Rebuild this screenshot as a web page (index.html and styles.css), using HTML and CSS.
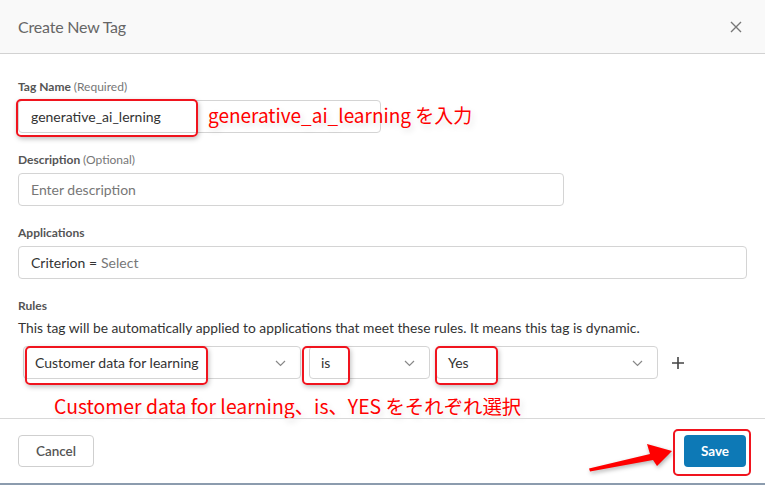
FILE: index.html
```html
<!DOCTYPE html>
<html lang="en">
<head>
<meta charset="UTF-8">
<meta name="viewport" content="width=device-width, initial-scale=1.0">
<title>Create New Tag</title>
<link rel="stylesheet" href="styles.css">
</head>
<body>

<div class="modal">
    <div class="modal-head">
        <h1>Create New Tag</h1>
        <svg class="close" width="12" height="12" viewBox="0 0 12 12"><path d="M1 1L11 11M11 1L1 11" stroke="#777" stroke-width="1.4"/></svg>
    </div>

    <div class="modal-body">
        <div class="field">
            <label>Tag Name <span class="hint">(Required)</span></label>
            <div class="input-wrap">
                <div class="input tag-input">generative_ai_lerning</div>
                <div class="mark mark-name"></div>
                <span class="note note-name">generative_ai_learning を入力</span>
            </div>
        </div>

        <div class="field">
            <label>Description <span class="hint">(Optional)</span></label>
            <div class="input desc-input placeholder">Enter description</div>
        </div>

        <div class="field">
            <label>Applications</label>
            <div class="input"><span class="dark">Criterion =</span> <span class="placeholder">Select</span></div>
        </div>

        <div class="field">
            <label>Rules</label>
            <p class="rules-text">This tag will be automatically applied to applications that meet these rules. It means this tag is dynamic.</p>
            <div class="rule-row">
                <div class="select sel-1">Customer data for learning
                    <svg class="chev" width="11" height="7" viewBox="0 0 11 7"><path d="M1 1L5.5 5.5L10 1" fill="none" stroke="#888" stroke-width="1.2"/></svg>
                    <div class="mark mark-1"></div>
                </div>
                <div class="select sel-2">is
                    <svg class="chev" width="11" height="7" viewBox="0 0 11 7"><path d="M1 1L5.5 5.5L10 1" fill="none" stroke="#888" stroke-width="1.2"/></svg>
                    <div class="mark mark-2"></div>
                </div>
                <div class="select sel-3">Yes
                    <svg class="chev" width="11" height="7" viewBox="0 0 11 7"><path d="M1 1L5.5 5.5L10 1" fill="none" stroke="#888" stroke-width="1.2"/></svg>
                    <div class="mark mark-3"></div>
                </div>
                <svg class="plus" width="14" height="14" viewBox="0 0 14 14"><path d="M7 1V13M1 7H13" stroke="#444" stroke-width="1.6"/></svg>
            </div>
            <div class="note note-rules">Customer data for learning、is、YES をそれぞれ選択</div>
        </div>
    </div>

    <div class="modal-foot">
        <button class="btn btn-cancel" type="button">Cancel</button>
        <div class="save-wrap">
            <svg class="arrow" width="92" height="45" viewBox="0 0 92 45">
                <path d="M5 29.5L66 15L63 5L88 12L73 27L69 21L6 32.5Z" fill="#f00"/>
            </svg>
            <button class="btn btn-save" type="button">Save</button>
            <div class="mark mark-save"></div>
        </div>
    </div>
</div>

</body>
</html>
```

FILE: styles.css
```css
body {
    margin: 0;
    font-family: Lato, "Noto Sans", sans-serif;
    background: #fff;
    width: 765px;
    height: 485px;
    overflow: hidden;
}

.modal {
    height: 485px;
    display: flex;
    flex-direction: column;
    box-sizing: border-box;
    border-bottom: 2px solid #8c9cae;
}

.modal-head {
    height: 53px;
    background-color: #f9f9f9;
    border-bottom: 1px solid #d2d2d2;
    display: flex;
    align-items: center;
    justify-content: space-between;
    padding: 0 23px 0 18px;
    flex-shrink: 0;
}

.modal-head h1 {
    margin: 0;
    font-size: 16px;
    font-weight: 400;
    color: #666;
    letter-spacing: -0.2px;
}

.modal-body {
    padding: 26px 18px 0 18px;
    flex: 1;
    min-height: 0;
}

.field {
    margin-bottom: 20px;
}

.field:last-child {
    margin-bottom: 0;
}

.field label {
    display: block;
    font-size: 12px;
    font-weight: 700;
    color: #555;
    line-height: 14px;
    margin-bottom: 6px;
}

.field label .hint {
    font-weight: 400;
    color: #777;
}

.input {
    box-sizing: border-box;
    height: 33px;
    border: 1px solid #d4d4d4;
    border-radius: 4px;
    padding: 0 12px;
    display: flex;
    align-items: center;
    font-size: 14px;
    color: #333;
    background: #fff;
}

.input .dark {
    margin-right: 4px;
}

.placeholder {
    color: #777;
}

.input-wrap {
    position: relative;
    display: flex;
    align-items: center;
}

.tag-input {
    width: 363px;
}

.desc-input {
    width: 546px;
}

.mark {
    position: absolute;
    border: 2px solid #f0141e;
    border-radius: 5px;
    box-shadow: 1px 2px 5px rgba(0, 0, 0, 0.25);
    box-sizing: border-box;
}

.mark-name {
    left: -2px;
    top: -1px;
    width: 182px;
    height: 38px;
}

.note {
    color: #ff0000;
    font-family: "Noto Sans CJK JP", "Noto Sans", sans-serif;
    font-size: 19px;
    line-height: 24px;
    text-shadow: 0 0 4px #fff, 0 0 6px #fff, 2px 3px 6px rgba(0, 0, 0, 0.15);
    white-space: nowrap;
}

.note-name {
    position: absolute;
    left: 190px;
    top: 3px;
}

.rules-text {
    margin: 7px 0 10px 0;
    font-size: 13.8px;
    color: #333;
    line-height: 16px;
}

.rule-row {
    display: flex;
    align-items: center;
    padding-left: 5px;
}

.select {
    position: relative;
    box-sizing: border-box;
    height: 33px;
    border: 1px solid #d4d4d4;
    border-radius: 4px;
    padding: 0 11px;
    display: flex;
    align-items: center;
    font-size: 14px;
    color: #333;
}

.select .chev {
    position: absolute;
    right: 14px;
    top: 13px;
}

.sel-1 {
    width: 278px;
    margin-right: 8px;
}

.sel-2 {
    width: 121px;
    margin-right: 6px;
}

.sel-3 {
    width: 222px;
}

.mark-1 {
    left: 1px;
    top: -1px;
    width: 183px;
    height: 39px;
}

.mark-2 {
    left: -8px;
    top: -1px;
    width: 48px;
    height: 39px;
}

.mark-3 {
    left: -2px;
    top: -1px;
    width: 63px;
    height: 39px;
}

.plus {
    margin-left: 13px;
}

.note-rules {
    font-size: 19.4px;
    margin: 15px 0 0 36px;
}

.modal-foot {
    height: 64px;
    border-top: 1px solid #d8d8d8;
    display: flex;
    align-items: center;
    justify-content: space-between;
    padding: 0 19px 0 18px;
    flex-shrink: 0;
}

.btn {
    font-family: Lato, "Noto Sans", sans-serif;
    font-size: 13.5px;
    height: 32px;
    border-radius: 4px;
    cursor: pointer;
}

.btn-cancel {
    width: 76px;
    background: #fff;
    border: 1px solid #cfcfcf;
    color: #555;
    font-weight: 600;
}

.save-wrap {
    position: relative;
}

.btn-save {
    width: 62px;
    background-color: #0d79b6;
    border: none;
    color: #fff;
    font-weight: 700;
}

.mark-save {
    left: -11px;
    top: -6px;
    width: 78px;
    height: 47px;
    box-shadow: none;
}

.arrow {
    position: absolute;
    left: -100px;
    top: 4px;
    filter: drop-shadow(1px 2px 2px rgba(0, 0, 0, 0.3));
}
```
